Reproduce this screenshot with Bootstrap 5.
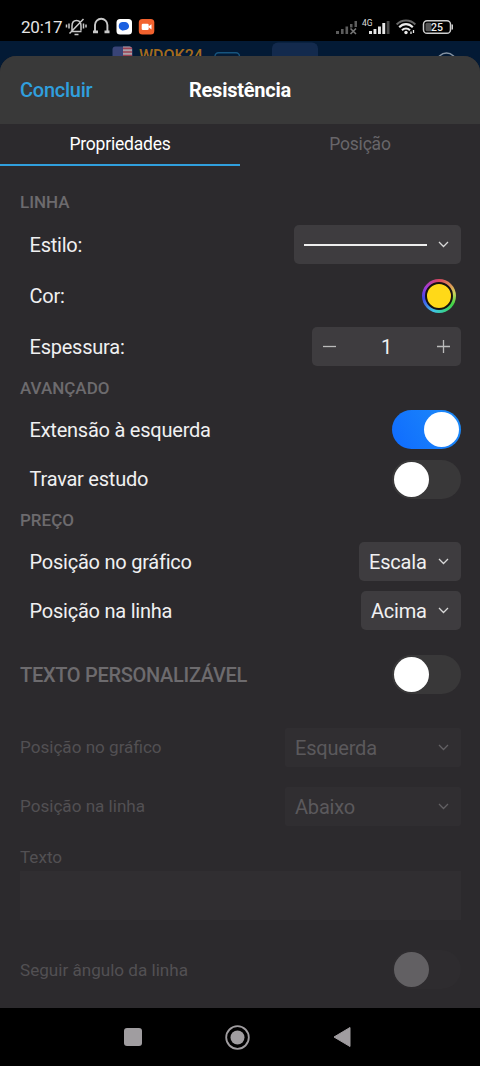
<!DOCTYPE html>
<html lang="pt-BR" data-bs-theme="dark">
<head>
<meta charset="utf-8">
<meta name="viewport" content="width=device-width, initial-scale=1">
<title>Resistência</title>
<link href="https://cdn.jsdelivr.net/npm/bootstrap@5.3.0/dist/css/bootstrap.min.css" rel="stylesheet">
<style>
  body { font-family: Roboto, "Noto Sans", sans-serif; background: #000; color: #f0f0f1; font-size: 20px; letter-spacing: -.23px; line-height: 1; width: 480px; height: 1066px; overflow: hidden; }
  svg { display: block; flex: none; letter-spacing: 0; }
  .statusbar { height: 41px; padding: 13px 26px 0 21px; }
  .clock { font-size: 17px; color: #e4e4e4; line-height: 28px; width: 44px; letter-spacing: -.2px; }
  .chart-strip { height: 15px; background: #031a35; }
  .ticker { font-size: 16px; letter-spacing: 0; line-height: 17px; color: #a46b1d; font-weight: 500; height: 15px; padding-top: 6px; width: 66px; }
  .sheet-wrap { background: #031a35; position: relative; }
  .sheet { background: #2c2a2d; height: 952px; border-radius: 16px 16px 0 0; overflow: hidden; }
  .sheet-head { height: 68px; background: #393939; padding: 0 20px; display: grid; grid-template-columns: 1fr auto 1fr; align-items: center; }
  .done-btn { color: #309fdd; font-size: 20px; font-weight: 500; line-height: 1; justify-self: start; letter-spacing: -.25px; }
  .sheet-title { font-size: 20px; font-weight: 700; color: #fff; }
  .tabset { height: 42px; }
  .tabset .tab { border: 0; background: none; color: #68666a; font-size: 17.5px; letter-spacing: -.2px; line-height: 40px; padding: 0; border-bottom: 2px solid transparent; border-radius: 0; }
  .tabset .tab.active { color: #fff; border-color: #309fdd; }
  .sec { padding-left: 20px; color: #6d6b6e; font-size: 17px; letter-spacing: 0; font-weight: 500; display: flex; align-items: center; }
  .opt { padding: 0 19px 0 29.5px; display: flex; align-items: center; justify-content: space-between; }
  .opt.flush { padding-left: 20px; }
  .ctl { background: #3e3c3f; border-radius: 5px; height: 39px; display: flex; align-items: center; color: #f0f0f1; border: 0; font-size: 20px; letter-spacing: -.2px; line-height: 1; padding: 0 12px 0 10px; justify-content: space-between; }
  .stroke-sample { width: 123px; height: 2px; background: #eee; }
  .wheel { width: 34px; height: 34px; border-radius: 50%; margin-right: 5px; background: conic-gradient(#d8455f, #dd9a55 50deg, #d0d35c 78deg, #43d443 120deg, #38cf9a 165deg, #3fc4e6 200deg, #4146e8 262deg, #a33bd6 305deg, #d8455f); display: grid; place-items: center; }
  .wheel span { width: 28px; height: 28px; border-radius: 50%; border: 2.5px solid #161210; background: #ffd918; }
  .tgl { width: 69px; height: 39px; border-radius: 20px; background: #393839; padding: 2px; display: flex; align-items: center; }
  .tgl i { width: 35px; height: 35px; border-radius: 50%; background: #fff; }
  .tgl.on { justify-content: flex-end; background: linear-gradient(60deg, #0f6bff, #1d8cf8); }
  .off-group { font-size: 17.1px; letter-spacing: 0; color: #525053; }
  .off-group .ctl { background: #302e31; color: #5b595c; width: 176px; border-radius: 2px; }
  .off-group .tgl { background: #2e2c2f; }
  .off-group .tgl i { background: #626063; }
  .textfield { height: 49px; background: #302e31; margin: 0 19px 0 20px; }
  .navkeys { height: 58px; display: grid; grid-template-columns: 18px 25px 18px; column-gap: 83px; align-items: center; padding-left: 124px; }
</style>
</head>
<body>
<header class="statusbar d-flex align-items-start">
  <span class="clock">20:17</span>
  <svg width="90" height="28" viewBox="65 13 90 28" fill="none" stroke="#c9c9c9" stroke-width="1.5">
    <path d="M70.500 31.500h11M72 30.500v-4.500c0-3.500 2-5.500 4.500-5.500s4.500 2 4.500 5.500v4.500M74.500 34.500h4M83.500 19l-14 14.500M69 23.500v5M66.500 24.500v3M83.500 23.500v5M86 24.500v3"/>
    <path d="M95 32.500v-7.500a6.200 6.200 0 0 1 12.400 0v7.500" stroke-width="1.900"/>
    <path d="M93 31.800h5M104.500 31.800h5" stroke-width="2.800"/>
    <rect x="116.500" y="19" width="15.500" height="15.500" rx="3.500" fill="#fff" stroke="none"/>
    <path d="M119.500 23.500c1.500-1.800 7-2 8.500 0 2 2.500 1 5.500-1.500 6.200-1.500.5-2.500.3-3.500 1-1.500-.7-4-1.500-4.200-3.700-.1-1.500 0-2.500.7-3.500z" fill="#1a5fe0" stroke="none"/>
    <rect x="138.800" y="19" width="15.500" height="15.500" rx="3.500" fill="#f2622e" stroke="none"/>
    <rect x="141.700" y="23.700" width="7" height="6.200" rx="1.200" fill="#fff" stroke="none"/><path d="M148 26.800l3.500-2.600v5.200z" fill="#fff" stroke="none"/>
  </svg>
  <svg class="ms-auto" width="120" height="28" viewBox="334 13 120 28">
    <g fill="#5c5c5c"><rect x="336" y="31" width="3" height="3"/><rect x="341" y="29" width="2.600" height="5"/><rect x="345.500" y="26.500" width="2.600" height="7.500"/><rect x="350" y="24" width="2.500" height="3.500"/><rect x="354.500" y="21" width="2.500" height="6"/></g>
    <path d="M350.500 28.500l5.500 5.500M356 28.500l-5.500 5.500" stroke="#777" stroke-width="1.600"/>
    <text x="362" y="26" font-family="Roboto" font-size="8.500" fill="#ddd">4G</text>
    <g fill="#e6e6e6"><rect x="369" y="31" width="3" height="3"/><rect x="373.500" y="29" width="2.900" height="5"/><rect x="378" y="26.500" width="2.900" height="7.500"/><rect x="382.300" y="23" width="2.900" height="11"/></g><rect x="386.700" y="21" width="2.800" height="13" fill="#4a4a4a"/>
    <g fill="none" stroke-width="2.100"><path d="M396.700 24.500c5-5.300 13.600-5.300 18.600 0" stroke="#666"/><path d="M399.200 27.300c4-4.200 9.600-4.200 13.600 0M402 30.300c2.400-2.400 5.600-2.400 8 0" stroke="#ececec"/></g>
    <circle cx="406" cy="32.500" r="1.700" fill="#ececec"/><path d="M411 31.500v2.500M413.500 30v3" stroke="#ececec" stroke-width="1.300"/>
    <rect x="423.500" y="20.700" width="27" height="12.600" rx="3.600" fill="none" stroke="#cfcfcf" stroke-width="1.500"/>
    <rect x="425.500" y="22.700" width="6" height="8.600" rx="1.500" fill="#555"/><rect x="451.500" y="24.500" width="1.500" height="5" fill="#cfcfcf"/>
    <text x="437" y="30.800" font-family="Roboto" font-size="10.500" font-weight="500" text-anchor="middle" fill="#eee">25</text>
  </svg>
</header>
<div class="chart-strip d-flex">
  <svg width="139" height="15" viewBox="0 0 139 15"><rect x="112.500" y="5.500" width="20" height="14" rx="3" fill="#394477"/><path d="M123 5.500h6.500a3 3 0 0 1 2.500 2V15h-9z" fill="#a9a0a8"/><path d="M123 7.300h9M123 11h9M123 14.500h9" stroke="#9c4052" stroke-width="1.700"/></svg>
  <span class="ticker">WDOK24</span>
  <svg width="275" height="15" viewBox="205 0 275 15" fill="none"><rect x="215" y="11.800" width="24.500" height="20" rx="3.500" stroke="#17557f" stroke-width="1.400"/><rect x="272" y="1.500" width="46" height="25" rx="6" fill="#132a4d"/><circle cx="446.500" cy="21.500" r="9.500" stroke="#8492a2" stroke-width="1.500"/></svg>
</div>
<div class="sheet-wrap">
<main class="sheet">
  <div class="sheet-head"><button class="btn p-0 border-0 done-btn">Concluir</button><div class="sheet-title">Resistência</div></div>
  <nav class="tabset d-flex"><button class="tab active w-50">Propriedades</button><button class="tab w-50">Posição</button></nav>

  <div class="sec" style="height:40px;margin-top:16px">LINHA</div>
  <div class="opt" style="height:45px">Estilo:
    <button class="ctl" style="width:167px"><span class="stroke-sample"></span><svg width="11" height="7" viewBox="0 0 11 7" fill="none" stroke="#d8d8d8" stroke-width="1.300"><path d="M1 1l4.500 4.500L10 1"/></svg></button></div>
  <div class="opt" style="height:57px">Cor:<span class="wheel"><span></span></span></div>
  <div class="opt" style="height:45px">Espessura:
    <div class="ctl" style="width:149px;padding:0 11px"><svg width="13" height="13" stroke="#bbb" stroke-width="1.300"><path d="M0 6.500h13"/></svg><span>1</span><svg width="13" height="13" stroke="#bbb" stroke-width="1.300"><path d="M0 6.500h13M6.500 0v13"/></svg></div></div>
  <div class="sec" style="height:38px;padding-top:1px">AVANÇADO</div>
  <div class="opt" style="height:45px">Extensão à esquerda<span class="tgl on"><i></i></span></div>
  <div class="opt" style="height:54px">Travar estudo<span class="tgl"><i></i></span></div>
  <div class="sec" style="height:29px">PREÇO</div>
  <div class="opt" style="height:53px">Posição no gráfico
    <button class="ctl" style="width:102px">Escala<svg width="11" height="7" viewBox="0 0 11 7" fill="none" stroke="#d8d8d8" stroke-width="1.300"><path d="M1 1l4.500 4.500L10 1"/></svg></button></div>
  <div class="opt" style="height:45px">Posição na linha
    <button class="ctl" style="width:100px">Acima<svg width="11" height="7" viewBox="0 0 11 7" fill="none" stroke="#d8d8d8" stroke-width="1.300"><path d="M1 1l4.500 4.500L10 1"/></svg></button></div>
  <div class="opt flush" style="height:83px"><span style="color:#6d6b6e;font-weight:500;letter-spacing:-.3px">TEXTO PERSONALIZÁVEL</span><span class="tgl"><i></i></span></div>

  <div class="off-group">
    <div class="opt flush" style="height:63px">Posição no gráfico
      <button class="ctl">Esquerda<svg width="11" height="7" viewBox="0 0 11 7" fill="none" stroke="#626063" stroke-width="1.300"><path d="M1 1l4.500 4.500L10 1"/></svg></button></div>
    <div class="opt flush" style="height:55px">Posição na linha
      <button class="ctl">Abaixo<svg width="11" height="7" viewBox="0 0 11 7" fill="none" stroke="#626063" stroke-width="1.300"><path d="M1 1l4.500 4.500L10 1"/></svg></button></div>
    <div class="opt flush" style="height:26px;margin-top:11px">Texto</div>
    <div class="textfield"></div>
    <div class="opt flush" style="height:78px;margin-top:10px"><span class="pt-1">Seguir ângulo da linha</span><span class="tgl"><i></i></span></div>
  </div>
</main>
</div>
<footer class="navkeys">
  <svg width="18" height="18"><rect width="18" height="18" rx="3" fill="#a09da0"/></svg>
  <svg width="25" height="25"><circle cx="12.500" cy="12.500" r="11.300" fill="none" stroke="#a09da0" stroke-width="1.800"/><circle cx="12.500" cy="12.500" r="7" fill="#a09da0"/></svg>
  <svg width="18" height="20"><path d="M17 .5v19L1 10z" fill="#a09da0" stroke="#a09da0" stroke-linejoin="round"/></svg>
</footer>
<script src="https://cdn.jsdelivr.net/npm/bootstrap@5.3.0/dist/js/bootstrap.bundle.min.js"></script>
</body>
</html>
